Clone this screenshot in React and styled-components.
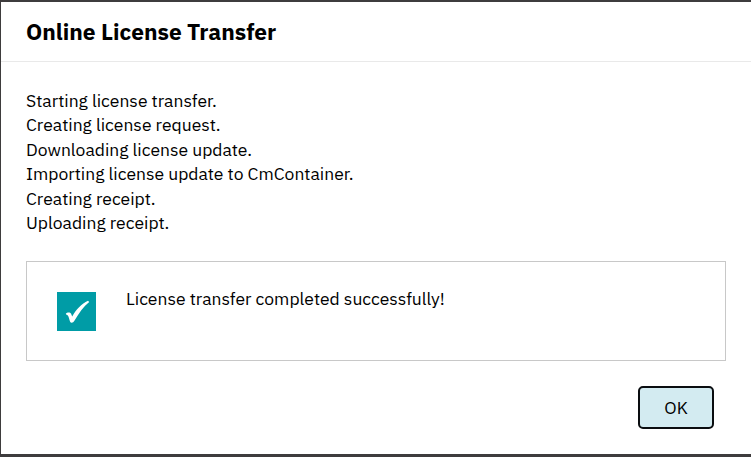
import React from 'react';
import styled, { createGlobalStyle } from 'styled-components';

const GlobalStyle = createGlobalStyle`
  *, *::before, *::after {
    box-sizing: border-box;
  }

  body {
    margin: 0;
    background-color: #fff;
    color: #000;
    font-family: 'IBM Plex Sans', Roboto, 'Liberation Sans', sans-serif;
  }
`;

const Dialog = styled.div`
  display: flex;
  flex-direction: column;
  width: 100%;
  height: 100vh;
  background-color: #fff;
  border: solid #3e3c3d;
  border-width: 2px 0 3px 1px;
`;

const DialogHeader = styled.header`
  display: flex;
  align-items: center;
  height: 60px;
  padding: 0 25px;
  border-bottom: 1px solid #e9e9e9;
`;

const DialogTitle = styled.h1`
  margin: 0;
  font-size: 22.75px;
  font-weight: 700;
  line-height: 30px;
`;

const DialogBody = styled.main`
  display: flex;
  flex-direction: column;
  padding: 27px 25px 0;
`;

const StepList = styled.ul`
  list-style-type: none;
  margin: 0;
  padding: 0;
`;

const Step = styled.li`
  font-size: 17.5px;
  line-height: 24.45px;
`;

const ResultBox = styled.section`
  display: flex;
  align-items: flex-start;
  gap: 30px;
  height: 100px;
  margin-top: 25px;
  padding: 30px;
  border: 1px solid #c8c8c8;
`;

const StatusIcon = styled.svg`
  flex: none;
  width: 39px;
  height: 39px;
  background-color: #009ca6;
`;

const ResultMessage = styled.p`
  margin: -5px 0 0;
  font-size: 17.5px;
  line-height: 24px;
`;

const DialogFooter = styled.footer`
  display: flex;
  justify-content: flex-end;
  padding: 25px 37px 0;
`;

const OkButton = styled.button`
  width: 76px;
  height: 43px;
  padding: 0;
  border: 2px solid #0a0d10;
  border-radius: 5px;
  background-color: #d3ebf1;
  color: #000;
  font-family: inherit;
  font-size: 17.5px;
  cursor: pointer;

  &:hover {
    background-color: #c2e2ea;
  }
`;

const steps = [
  'Starting license transfer.',
  'Creating license request.',
  'Downloading license update.',
  'Importing license update to CmContainer.',
  'Creating receipt.',
  'Uploading receipt.',
];

function CheckIcon() {
  return (
    <StatusIcon viewBox="0 0 39 39" aria-hidden="true">
      <path
        d="M8.8 21.8 C9.8 20.2 13.2 19.8 14 21.6 L15.2 24.4 C19 18 24.5 11.6 31 8.8 L32.2 10 C26.6 14.5 21.6 21.5 17.4 28.8 C16.4 30.8 14 31.6 13.1 29.8 C12.4 27.5 11.6 23.8 10.6 23.2 C9.9 22.8 9.1 22.8 8.8 21.8 Z"
        fill="#fff"
      />
    </StatusIcon>
  );
}

function App() {
  return (
    <>
      <GlobalStyle />
      <Dialog role="dialog" aria-labelledby="dialog-title">
        <DialogHeader>
          <DialogTitle id="dialog-title">Online License Transfer</DialogTitle>
        </DialogHeader>
        <DialogBody>
          <StepList>
            {steps.map((step) => (
              <Step key={step}>{step}</Step>
            ))}
          </StepList>
          <ResultBox>
            <CheckIcon />
            <ResultMessage>License transfer completed successfully!</ResultMessage>
          </ResultBox>
        </DialogBody>
        <DialogFooter>
          <OkButton type="button">OK</OkButton>
        </DialogFooter>
      </Dialog>
    </>
  );
}

export default App;
